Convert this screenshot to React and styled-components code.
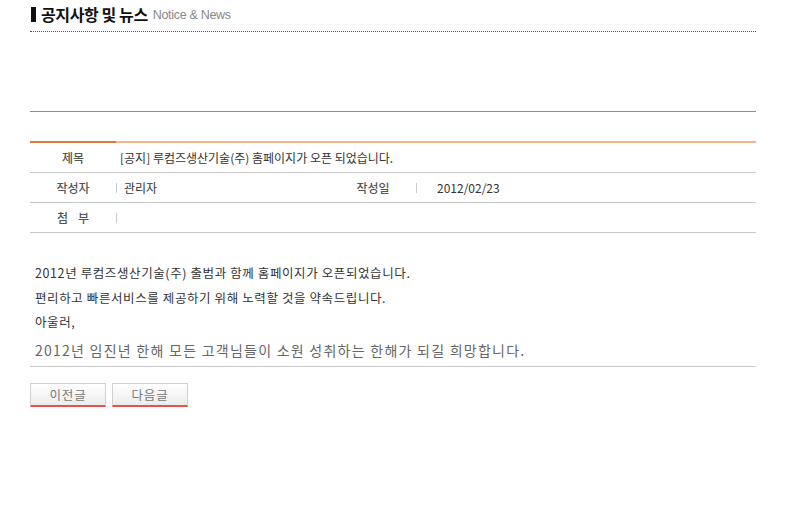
import React from 'react'
import styled, { createGlobalStyle } from 'styled-components'

const Global = createGlobalStyle`
  body {
    margin: 0;
    background: #fff;
    font-family: "Noto Sans CJK KR", "Noto Sans", sans-serif;
    color: #333;
  }
`

const Outer = styled.div`
  width: 726px;
  padding-left: 30px;
`

const Header = styled.div`
  height: 31px;
  display: flex;
  align-items: center;
  border-bottom: 1px dotted #555;
`

const Bar = styled.span`
  display: inline-block;
  width: 5px;
  height: 15px;
  background: #111;
  margin-left: 1px;
  margin-right: 5px;
  margin-top: -2px;
`

const Title = styled.h1`
  margin: 0;
  font-size: 16px;
  font-weight: 700;
  color: #111;
  letter-spacing: -0.4px;
  margin-top: -3px;
`

const Sub = styled.span`
  font-family: "Liberation Sans", Arial, sans-serif;
  font-size: 12.5px;
  color: #888;
  margin-left: 5px;
  letter-spacing: -0.3px;
  margin-top: -1px;
`

const Rule = styled.div`
  margin-top: 79px;
  height: 1px;
  background: #8c8c8c;
`

const Table = styled.div`
  margin-top: 29px;
  border-top: 2px solid #f4b48c;
  position: relative;

  &::before {
    content: '';
    position: absolute;
    left: 0;
    top: -2px;
    width: 86px;
    height: 2px;
    background: #e27a36;
  }
`

const Row = styled.div`
  display: grid;
  grid-template-columns: ${p => (p.split ? '86px 214px 86px 1fr' : '86px 1fr')};
  height: 29px;
  align-items: center;
  border-bottom: 1px solid #c8c8c8;
`

const Label = styled.div`
  text-align: center;
  font-size: 12px;
  font-weight: 500;
  color: #555;
  letter-spacing: ${p => (p.wide ? '10px' : '0')};
  padding-left: ${p => (p.wide ? '10px' : '0')};
`

const Value = styled.div`
  display: flex;
  align-items: center;
  font-size: 12px;
  color: #333;
  padding-left: ${p => p.pad || 4}px;
  height: 100%;
  position: relative;

  ${p => p.sep && `
    &::before {
      content: '';
      position: absolute;
      left: 0;
      top: 10px;
      width: 1px;
      height: 10px;
      background: #ccc;
    }
  `}
`

const Body = styled.div`
  padding: 28px 0 0 5px;
  border-bottom: 1px solid #c8c8c8;
`

const Line = styled.p`
  margin: 0;
  font-size: 12.5px;
  line-height: 24.5px;
  letter-spacing: 0.6px;
  color: #333;
`

const Wish = styled.p`
  margin: 0;
  padding: 5px 0 6px;
  font-size: 14px;
  line-height: 20px;
  color: #666;
  letter-spacing: 1.25px;
`

const Buttons = styled.div`
  display: flex;
  gap: 6px;
  margin-top: 16px;
`

const Button = styled.button`
  width: 76px;
  height: 24px;
  padding: 0;
  border: 1px solid #d0d0d0;
  border-bottom: 2px solid #e8504a;
  background: linear-gradient(#ffffff, #ececec);
  font-family: "Noto Sans CJK KR", sans-serif;
  font-size: 12.5px;
  color: #777;
  letter-spacing: 0.8px;
`

export default function App() {
  return (
    <Outer>
      <Global />
      <Header>
        <Bar />
        <Title>공지사항 및 뉴스</Title>
        <Sub>Notice &amp; News</Sub>
      </Header>
      <Rule />
      <Table>
        <Row>
          <Label>제목</Label>
          <Value>[공지] 루컴즈생산기술(주) 홈페이지가 오픈 되었습니다.</Value>
        </Row>
        <Row split>
          <Label>작성자</Label>
          <Value sep pad={8}>관리자</Value>
          <Label>작성일</Label>
          <Value sep pad={21}>2012/02/23</Value>
        </Row>
        <Row>
          <Label wide>첨부</Label>
          <Value sep />
        </Row>
      </Table>
      <Body>
        <Line>2012년 루컴즈생산기술(주) 출범과 함께 홈페이지가 오픈되었습니다.</Line>
        <Line>편리하고 빠른서비스를 제공하기 위해 노력할 것을 약속드립니다.</Line>
        <Line>아울러,</Line>
        <Wish>2012년 임진년 한해 모든 고객님들이 소원 성취하는 한해가 되길 희망합니다.</Wish>
      </Body>
      <Buttons>
        <Button>이전글</Button>
        <Button>다음글</Button>
      </Buttons>
    </Outer>
  )
}
